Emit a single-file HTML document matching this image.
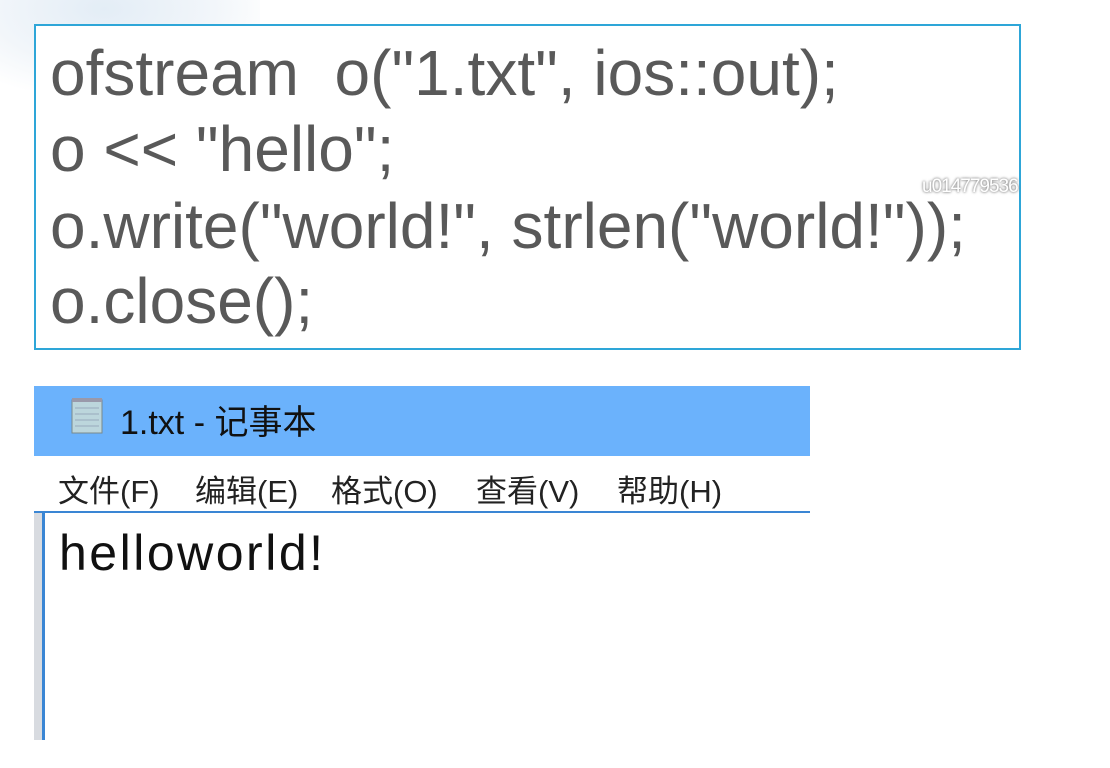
<!DOCTYPE html>
<html><head><meta charset="utf-8"><style>
body{margin:0;width:1110px;height:768px;background:#fff;position:relative;overflow:hidden;font-family:"Liberation Sans","Noto Sans CJK SC",sans-serif}
.bg{position:absolute;left:0;top:0;width:260px;height:90px;background:radial-gradient(ellipse at 40% 10%,#e3edf6 0%,#f2f6fa 50%,#fff 80%)}
.code{position:absolute;left:34px;top:24px;width:983px;height:322px;border:2px solid #2ea6d8;background:#fff}
.code div{position:absolute;left:14px;font-size:64px;color:#595959;white-space:pre;line-height:1}
.wm{position:absolute;left:922px;top:176px;font-size:19px;color:#fff;text-shadow:0 0 2px #888,0 0 3px #999;letter-spacing:-1px}
.tb{position:absolute;left:34px;top:386px;width:776px;height:70px;background:#6bb2fc}
.tb span{position:absolute;left:86px;top:9px;font-size:34px;color:#111}
.menu{position:absolute;left:34px;top:456px;width:776px;height:55px;background:#fff;border-bottom:2px solid #3a86d4}
.menu span{position:absolute;top:10px;font-size:31px;color:#222}
.strip{position:absolute;left:34px;top:386px;width:8px;height:354px;background:#d8dbe0}
.vline{position:absolute;left:42px;top:512px;width:3px;height:228px;background:#3a86d4}
.txt{position:absolute;left:59px;top:524px;font-size:50px;color:#111;letter-spacing:2.5px}
</style></head><body>
<div class="bg"></div>
<div class="code">
<div style="top:15px">ofstream  o("1.txt", ios::out);</div>
<div style="top:91px">o &lt;&lt; "hello";</div>
<div style="top:168px">o.write("world!", strlen("world!"));</div>
<div style="top:243px">o.close();</div>
</div>
<div class="wm">u014779536</div>
<div class="strip"></div>
<div class="tb">
<svg style="position:absolute;left:34px;top:10px" width="40" height="40" viewBox="0 0 40 40"><rect x="4" y="4" width="30" height="33" fill="#bcd6dc" stroke="#7a8a8c"/><g stroke="#9ab" stroke-width="1"><line x1="7" y1="12" x2="31" y2="12"/><line x1="7" y1="18" x2="31" y2="18"/><line x1="7" y1="24" x2="31" y2="24"/><line x1="7" y1="30" x2="31" y2="30"/></g><rect x="4" y="2" width="30" height="4" fill="#99a"/></svg>
<span>1.txt - 记事本</span></div>
<div class="menu">
<span style="left:24px">文件(F)</span>
<span style="left:161px">编辑(E)</span>
<span style="left:297px">格式(O)</span>
<span style="left:442px">查看(V)</span>
<span style="left:583px">帮助(H)</span>
</div>
<div class="vline"></div>
<div class="txt">helloworld!</div>
</body></html>
